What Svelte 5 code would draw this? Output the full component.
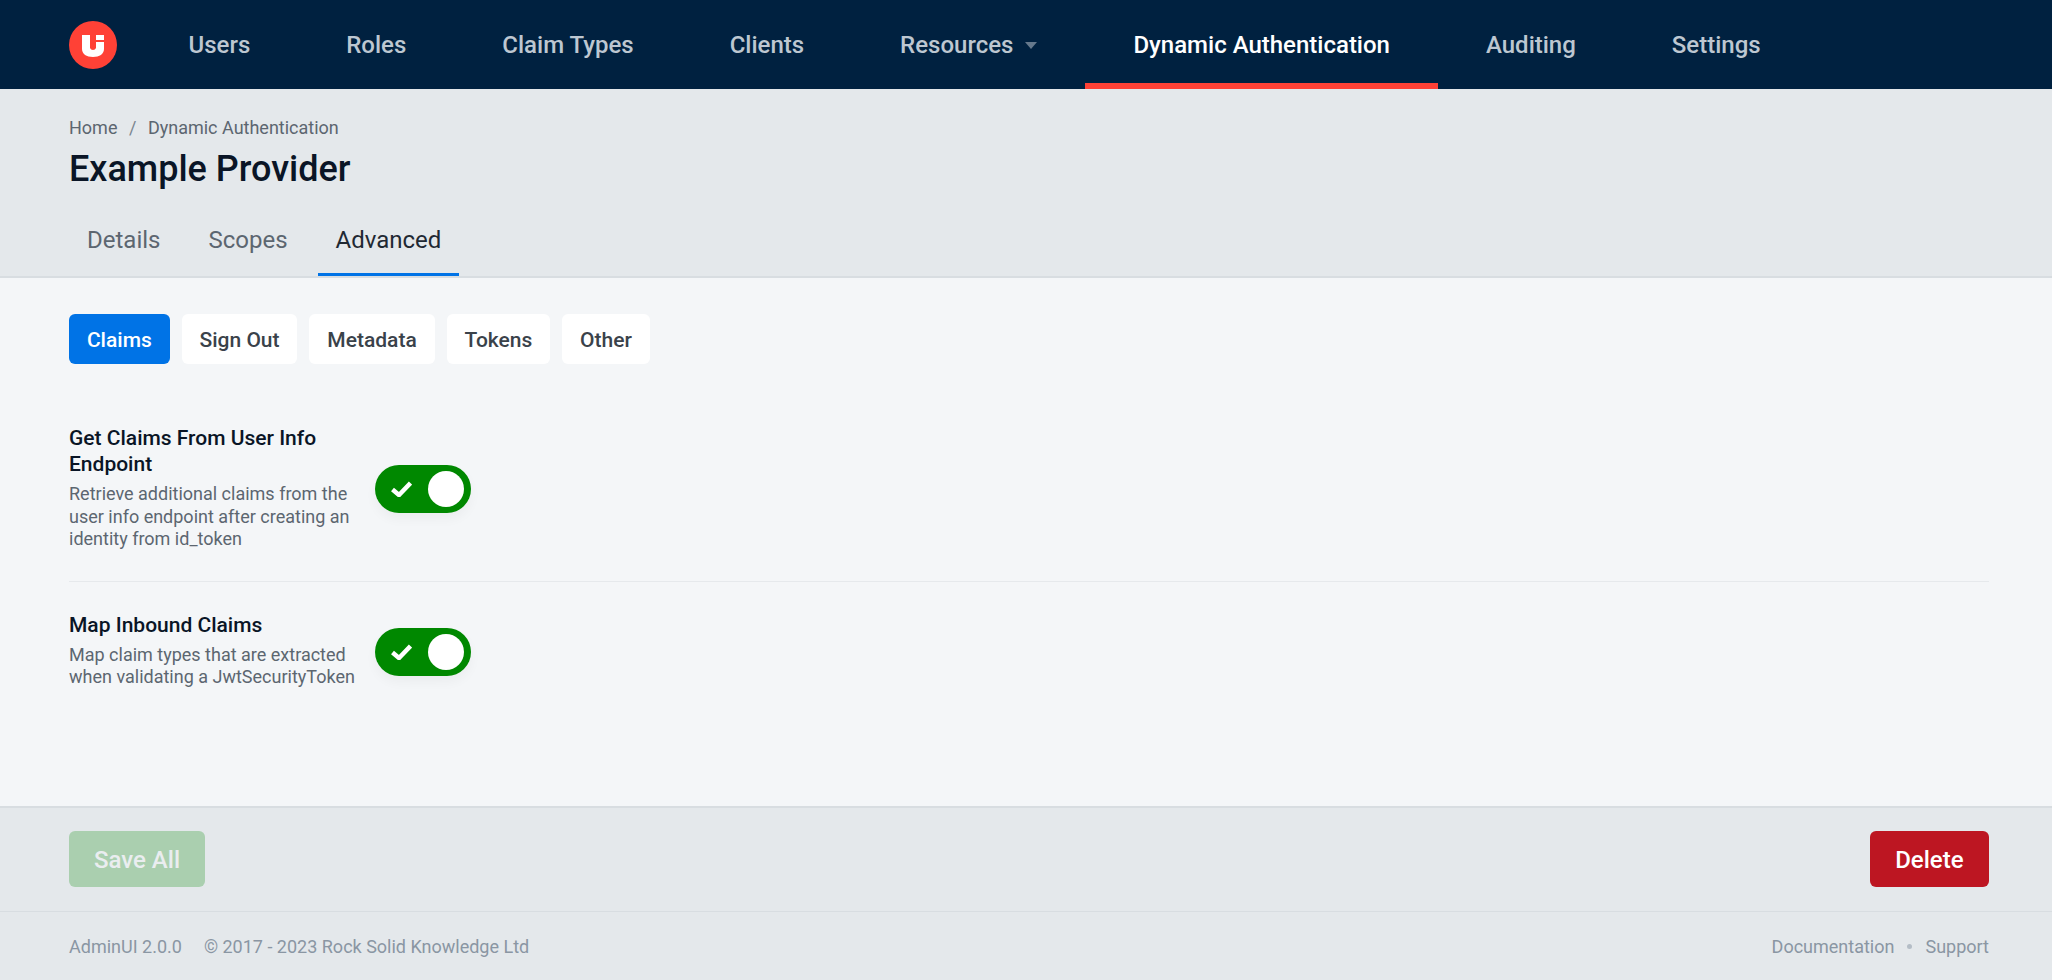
<script>
  const navItems = [
    { label: "Users" },
    { label: "Roles" },
    { label: "Claim Types" },
    { label: "Clients" },
    { label: "Resources", caret: true },
    { label: "Dynamic Authentication", active: true },
    { label: "Auditing" },
    { label: "Settings" }
  ];
  const tabs = ["Details", "Scopes", "Advanced"];
  const subTabs = ["Claims", "Sign Out", "Metadata", "Tokens", "Other"];
  const settings = [
    {
      title: "Get Claims From User Info Endpoint",
      desc: "Retrieve additional claims from the user info endpoint after creating an identity from id_token"
    },
    {
      title: "Map Inbound Claims",
      desc: "Map claim types that are extracted when validating a JwtSecurityToken"
    }
  ];
</script>

<div class="page">
  <nav class="topbar">
    <svg class="logo" viewBox="0 0 48 48" width="48" height="48" aria-label="AdminUI">
      <circle cx="24" cy="24" r="24" fill="#ff4136" />
      <path d="M13 14h8v13a3.200 3.200 0 0 0 6 0v-6h8v7c0 5-4.500 8-11 8s-11-3-11-8z" fill="#fff" />
      <rect x="27" y="14" width="8" height="5" fill="#fff" />
    </svg>
    <ul class="nav">
      {#each navItems as item}
        <li class="nav-item" class:active={item.active}>
          {item.label}
          {#if item.caret}<span class="caret"></span>{/if}
        </li>
      {/each}
    </ul>
  </nav>

  <header class="head">
    <div class="crumbs"><span>Home</span><span class="sep">/</span><span>Dynamic Authentication</span></div>
    <h1>Example Provider</h1>
    <div class="tabs">
      {#each tabs as tab}
        <div class="tab" class:current={tab === "Advanced"}>{tab}</div>
      {/each}
    </div>
  </header>

  <main class="content">
    <div class="pills">
      {#each subTabs as pill}
        <div class="pill" class:selected={pill === "Claims"}>{pill}</div>
      {/each}
    </div>

    {#each settings as s}
      <section class="setting">
        <div class="label">
          <h2>{s.title}</h2>
          <p>{s.desc}</p>
        </div>
        <div class="toggle">
          <svg viewBox="0 0 21 16" width="21" height="16">
            <path d="M1.500 8.500l6.500 5.500L19.500 2" fill="none" stroke="#fff" stroke-width="4.500" />
          </svg>
          <span class="knob"></span>
        </div>
      </section>
    {/each}
  </main>

  <div class="actions">
    <button class="btn save">Save All</button>
    <button class="btn delete">Delete</button>
  </div>

  <footer class="footer">
    <div class="left"><span>AdminUI 2.0.0</span><span>© 2017 - 2023 Rock Solid Knowledge Ltd</span></div>
    <div class="right"><span>Documentation</span><span class="dot"></span><span>Support</span></div>
  </footer>
</div>

<style>
  :global(body) {
    margin: 0;
    font-family: Roboto, "Liberation Sans", sans-serif;
  }
  .page {
    display: flex;
    flex-direction: column;
    height: 980px;
    background: #f4f6f8;
  }
  .topbar {
    display: flex;
    align-items: center;
    height: 89px;
    padding-left: 69px;
    background: #002140;
    flex: none;
  }
  .nav {
    display: flex;
    height: 100%;
    margin: 0 0 0 23.500px;
    padding: 0;
    list-style: none;
  }
  .nav-item {
    display: flex;
    align-items: center;
    box-sizing: border-box;
    height: 100%;
    padding: 6px 48px 0;
    font-size: 24px;
    font-weight: 500;
    color: #bdc7d1;
    border-bottom: 6px solid transparent;
  }
  .nav-item.active {
    color: #fff;
    border-bottom-color: #ff4136;
  }
  .caret {
    margin-left: 12px;
    margin-top: 2px;
    border-left: 6px solid transparent;
    border-right: 6px solid transparent;
    border-top: 7px solid #66798c;
  }
  .head {
    flex: none;
    box-sizing: border-box;
    height: 189px;
    padding: 27px 69px 0;
    background: #e4e8eb;
    border-bottom: 2px solid #d8dde1;
  }
  .crumbs {
    display: flex;
    gap: 11.500px;
    font-size: 18px;
    line-height: 24px;
    color: #5c6670;
  }
  .sep {
    color: #7a8590;
  }
  h1 {
    margin: 7px 0 0;
    font-size: 36px;
    line-height: 44px;
    font-weight: 500;
    color: #0a1526;
  }
  .tabs {
    display: flex;
    gap: 12px;
    margin-top: 22px;
  }
  .tab {
    box-sizing: border-box;
    height: 63px;
    padding: 0 18px;
    font-size: 24px;
    line-height: 54px;
    color: #5c6670;
    border-bottom: 3px solid transparent;
  }
  .tab.current {
    color: #1f2933;
    border-bottom-color: #0073e6;
  }
  .content {
    flex: 1;
    padding: 36px 63px 0 69px;
  }
  .pills {
    display: flex;
    gap: 12px;
    margin-bottom: 61px;
  }
  .pill {
    height: 50px;
    padding: 0 17.900px;
    border-radius: 6px;
    background: #fff;
    font-size: 21px;
    font-weight: 500;
    line-height: 52px;
    color: #3a424a;
  }
  .pill.selected {
    background: #0073e6;
    color: #fff;
  }
  .setting {
    display: flex;
    align-items: center;
    gap: 16px;
    padding-bottom: 30px;
    margin-bottom: 30px;
    border-bottom: 1px solid #e6e9ec;
  }
  .setting:last-child {
    border-bottom: 0;
    margin-bottom: 0;
  }
  .label {
    width: 290px;
  }
  h2 {
    margin: 0 0 6px;
    font-size: 21px;
    line-height: 26px;
    font-weight: 500;
    color: #0a1526;
  }
  p {
    margin: 0;
    font-size: 18px;
    line-height: 22.500px;
    color: #5c6670;
  }
  .toggle {
    display: flex;
    align-items: center;
    justify-content: space-between;
    box-sizing: border-box;
    width: 96px;
    height: 48px;
    margin-top: 3px;
    padding: 0 7px 0 16px;
    border-radius: 24px;
    background: #008800;
    box-shadow: 0 6px 12px rgba(0, 0, 0, 0.04);
  }
  .knob {
    width: 36px;
    height: 36px;
    border-radius: 50%;
    background: #fff;
  }
  .actions {
    flex: none;
    display: flex;
    justify-content: space-between;
    box-sizing: border-box;
    height: 106px;
    padding: 23px 63px 0 69px;
    background: #e4e8eb;
    border-top: 2px solid #d8dde1;
    border-bottom: 1px solid #d8dde1;
  }
  .btn {
    height: 56px;
    padding: 2px 25.500px 0;
    border: 0;
    border-radius: 6px;
    font-family: inherit;
    font-size: 24px;
    font-weight: 500;
    color: #fff;
  }
  .save {
    padding: 2px 25px 0;
    background: #008800;
    opacity: 0.25;
    color: #fff;
  }
  .delete {
    background: #bd1622;
  }
  .footer {
    flex: none;
    display: flex;
    justify-content: space-between;
    align-items: center;
    box-sizing: border-box;
    height: 68px;
    padding: 1px 63px 0 69px;
    background: #e4e8eb;
    font-size: 18px;
    color: #8a96a3;
  }
  .left {
    display: flex;
    gap: 22px;
  }
  .right {
    display: flex;
    align-items: center;
    gap: 13px;
  }
  .dot {
    width: 5px;
    height: 5px;
    border-radius: 50%;
    background: #b4bdc6;
  }
</style>
